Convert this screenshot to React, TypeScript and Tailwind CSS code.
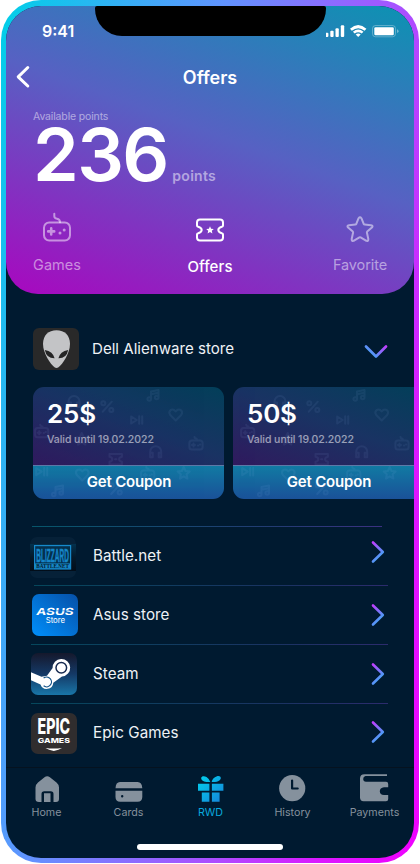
import type { ReactNode } from "react";

/* ---------- shared icon shapes, each centred on 0,0 ---------- */

const GAMEPAD = "M-4 -3.6 H4 Q6.6 -3.6 6.6 -1 V3 Q6.6 5.6 4 5.6 H-4 Q-6.6 5.6 -6.6 3 V-1 Q-6.6 -3.6 -4 -3.6 Z M-4 1 H-1 M-2.5 -.5 V2.5 M2 1.4 H2.2 M4 .4 H4.2 M-1.5 -7 Q-1.5 -5.5 0 -5.4 Q1 -5.2 1 -3.8";
const TICKET = "M-6.2 -5.2 H6.2 V-2.5 Q3.4 -2 3.4 0 Q3.4 2 6.2 2.5 V5.2 H-6.2 V2.5 Q-3.4 2 -3.4 0 Q-3.4 -2 -6.2 -2.5 Z M-.6 0 H.6";
const STAR = "M0 -6 L1.8 -2 L6 -1.6 L2.9 1.3 L3.7 5.6 L0 3.4 L-3.7 5.6 L-2.9 1.3 L-6 -1.6 L-1.8 -2 Z";
const HEART = "M0 5.5 L-5.5 0 Q-7.5 -3 -5 -5 Q-2.2 -6.4 0 -3.5 Q2.2 -6.4 5 -5 Q7.5 -3 5.5 0 Z";
const MUSIC = "M-2.5 3.5 V-4 L5 -5.5 V2 M-2.5 -1.2 L5 -2.7 M-2.5 3.5 a1.8 1.8 0 1 1 -3.6 0 a1.8 1.8 0 1 1 3.6 0 M5 2 a1.8 1.8 0 1 1 -3.6 0 a1.8 1.8 0 1 1 3.6 0";
const HEADPHONES = "M-5.5 3.5 V0 A5.5 5.5 0 0 1 5.5 0 V3.5 M-5.5 1 H-3 V5.5 H-5.5 Z M5.5 1 H3 V5.5 H5.5 Z";
const PERCENT = "M4.5 -5 L-4.5 5 M-2 -3.4 a2 2 0 1 1 -4 0 a2 2 0 1 1 4 0 M6 3.4 a2 2 0 1 1 -4 0 a2 2 0 1 1 4 0";
const PLAY_PAUSE = "M-5.5 -3.5 L0 0 L-5.5 3.5 Z M2.5 -3.8 V3.8 M5.5 -3.8 V3.8";

const PATTERN: [string, number, number][] = [
  [HEADPHONES, 41, 14.5],
  [PERCENT, 74.3, 19.7],
  [MUSIC, 120.5, 8.5],
  [PLAY_PAUSE, 103.7, 33],
  [HEART, 142.7, 28],
  [GAMEPAD, 8.7, 44.7],
  [STAR, 48.7, 52],
  [GAMEPAD, 163, 57],
  [HEADPHONES, 122.7, 64.7],
  [TICKET, 82.7, 72.3],
  [PLAY_PAUSE, 8.7, 84.7],
  [HEART, 49.3, 88],
  [GAMEPAD, 114.7, 87],
  [STAR, 150.7, 86],
  [MUSIC, 25, 104],
  [PERCENT, 82.7, 102],
];

function StatusBar() {
  return (
    <div className="flex h-[31px] shrink-0">
      <div className="w-[89px] pl-[36px] pt-[15px] text-[16px] font-[560] leading-[21px]">9:41</div>
      <div className="h-[30px] w-[231px] rounded-b-[27px] rounded-t-[2px] bg-black" />
      <svg width="76" height="18" viewBox="0 0 76 18" className="mt-[16px]" fill="#fff">
        <rect x="-.8" y="10.7" width="3.2" height="4.3" rx="1" />
        <rect x="4.3" y="8.7" width="3.3" height="6.3" rx="1" />
        <rect x="9.5" y="6.2" width="3.3" height="8.8" rx="1" />
        <rect x="14.8" y="3.2" width="3.4" height="11.8" rx="1" />
        <path d="M24 6.8 Q32.2 -.6 40.4 6.8 L38.6 8.8 Q32.2 3.5 25.8 8.8 Z" />
        <path d="M26.9 9.8 Q32.2 5.2 37.5 9.8 L35.7 11.6 Q32.2 9 28.7 11.6 Z" />
        <path d="M29.7 12.6 Q32.2 10.4 34.7 12.6 L32.2 15 Z" />
        <rect x="46.5" y="3.5" width="23" height="11.3" rx="3" fill="none" stroke="#fff" strokeOpacity=".3" />
        <rect x="48.3" y="5.2" width="19.5" height="8" rx="1.3" />
        <path d="M71 7.3 Q72.6 8 72.6 9.2 Q72.6 10.4 71 11.1 Z" fillOpacity=".4" />
      </svg>
    </div>
  );
}

function Header() {
  return (
    <header className="flex h-[288px] shrink-0 flex-col rounded-b-[32px] bg-[linear-gradient(200deg,#0b93b2_0%,#5761c3_46%,#a907bf_100%)]">
      <StatusBar />
      <div className="flex h-[66px] items-start pt-[28px]">
        <svg width="14" height="24" viewBox="0 0 14 24" className="ml-[10px]" fill="none" stroke="#fff" strokeWidth="3" strokeLinecap="round" strokeLinejoin="round">
          <path d="M11.8 2.5 L2.2 11.8 L11.8 21" />
        </svg>
        <h1 className="flex-1 pr-[24px] text-center text-[18px] font-[560] leading-[25px]">Offers</h1>
      </div>
      <p className="ml-[27px] h-[20px] pt-[6px] text-[10.5px] leading-[15px] tracking-[-0.15px] text-white/50">Available points</p>
      <div className="-mt-px ml-[27px] flex h-[79px] items-baseline">
        <span className="text-[73.5px] font-[580] leading-[66px] tracking-[-1.6px]">236</span>
        <span className="ml-[4.5px] text-[14px] font-semibold tracking-[0.3px] text-white/50">points</span>
      </div>
      <div className="flex justify-between px-[27px] text-[14.5px] leading-[20px]">
        <div className="flex w-[48px] flex-col items-center text-white/50">
          <svg width="30" height="32" viewBox="0 0 30 32" className="mt-[10px]" fill="none" stroke="currentColor" strokeWidth="2" strokeLinecap="round" strokeLinejoin="round">
            <path d="M12.3 2.8 V5.2 C12.3 7 13.2 7.4 15 7.7 C17 8 18 9 18 11.2" />
            <rect x="2" y="11.5" width="26" height="18" rx="5.2" />
            <path d="M6.2 20.4 H12.2 M9.2 17.4 V23.4" strokeWidth="2.6" />
            <circle cx="18" cy="22" r="1.5" fill="currentColor" stroke="none" />
            <circle cx="22.2" cy="19" r="1.5" fill="currentColor" stroke="none" />
          </svg>
          <span className="mt-[12px]">Games</span>
        </div>
        <div className="ml-[6px] flex w-[56px] flex-col items-center">
          <svg width="30" height="26" viewBox="0 0 30 26" className="mt-[16px]" fill="none" stroke="#fff" strokeWidth="2" strokeLinejoin="round">
            <path d="M5 2.5 H25 Q28 2.5 28 5.5 V8.4 Q28 9.5 26.8 9.8 Q23.3 10.8 23.3 13 Q23.3 15.2 26.8 16.2 Q28 16.5 28 17.6 V20.5 Q28 23.5 25 23.5 H5 Q2 23.5 2 20.5 V17.6 Q2 16.5 3.2 16.2 Q6.7 15.2 6.7 13 Q6.7 10.8 3.2 9.8 Q2 9.5 2 8.4 V5.5 Q2 2.5 5 2.5 Z" />
            <path d="M15 9.2 L16.1 11.7 L18.8 12 L16.8 13.8 L17.4 16.5 L15 15.1 L12.6 16.5 L13.2 13.8 L11.2 12 L13.9 11.7 Z" fill="#fff" stroke="none" />
          </svg>
          <span className="mt-[14px] text-[15px] font-medium tracking-[0.1px]">Offers</span>
        </div>
        <div className="flex w-[54px] flex-col items-center text-white/50">
          <svg width="28" height="28" viewBox="0 0 28 28" className="mt-[14px]" fill="none" stroke="currentColor" strokeWidth="2" strokeLinejoin="round">
            <path d="M12.6 3.2 Q14 1.2 15.4 3.2 L17.8 9.1 Q18 9.6 18.6 9.6 L25 10.2 Q27.6 10.7 25.9 12.5 L21.2 16.6 Q20.8 17 20.9 17.5 L22.3 24 Q22.4 26.4 20.4 25.8 L14.6 22.3 Q14 22 13.4 22.3 L7.6 25.8 Q5.6 26.4 5.7 24 L7.1 17.5 Q7.2 17 6.8 16.6 L2.1 12.5 Q.4 10.7 3 10.2 L9.4 9.6 Q10 9.6 10.2 9.1 Z" />
          </svg>
          <span className="mt-[12px] tracking-[-0.1px]">Favorite</span>
        </div>
      </div>
    </header>
  );
}

function Chevron({ down = false }: { down?: boolean }) {
  return down ? (
    <svg width="24" height="16" viewBox="0 0 24 16" fill="none" strokeWidth="2.7" strokeLinecap="round" strokeLinejoin="round">
      <defs>
        <linearGradient id="chevDown" gradientUnits="userSpaceOnUse" x1="22" y1="2" x2="10" y2="15">
          <stop stopColor="#c13cff" />
          <stop offset="1" stopColor="#3fa8f5" />
        </linearGradient>
      </defs>
      <path d="M2 2.5 L12 12.5 L22 2.5" stroke="url(#chevDown)" />
    </svg>
  ) : (
    <svg width="14" height="24" viewBox="0 0 14 24" fill="none" strokeWidth="2.6" strokeLinecap="round" strokeLinejoin="round">
      <defs>
        <linearGradient id="chevRight" gradientUnits="userSpaceOnUse" x1="2" y1="2" x2="14" y2="14">
          <stop stopColor="#c13cff" />
          <stop offset="1" stopColor="#3fa8f5" />
        </linearGradient>
      </defs>
      <path d="M2 2.5 L11.8 12 L2 21.5" stroke="url(#chevRight)" />
    </svg>
  );
}

function Coupon({ amount, shift }: { amount: string; shift: number }) {
  return (
    <article className="relative flex h-[112px] w-[191px] shrink-0 flex-col overflow-hidden rounded-[11px]">
      <div className="h-[78px] bg-[linear-gradient(200deg,#023f59_0%,#193363_48%,#301a5e_100%)] pl-[14px] pt-[10px]">
        <div className="text-[26px] font-[560] leading-[34px] tracking-[-0.2px]">{amount}</div>
        <div className="mt-[1px] text-[10.5px] font-medium leading-[15px] tracking-[-0.05px] text-white/55">Valid until 19.02.2022</div>
      </div>
      <button className="flex h-[34px] items-center justify-center border-t border-[#5d79a8] bg-[linear-gradient(180deg,#117aa3,#1a5198)] pl-[1px] text-[15px] font-[560] tracking-[-0.15px]">Get Coupon</button>
      <svg width="200" height="112" viewBox="0 0 200 112" className="pointer-events-none absolute left-0 top-0 opacity-[0.07]" fill="none" stroke="#a8c8ff" strokeWidth="2" strokeLinecap="round" strokeLinejoin="round">
        {PATTERN.map(([d, x, y], i) => (
          <path key={i} d={d} transform={`translate(${x + shift} ${y})`} />
        ))}
      </svg>
    </article>
  );
}

function AlienwareLogo() {
  return (
    <svg width="46" height="42" viewBox="0 0 46 42">
      <rect width="46" height="42" rx="6" fill="#292929" />
      <path d="M23.5 2.2 C31.5 2.2 37 7.2 37 16 C37 25 29.5 36.5 25.5 39.3 Q23.5 40.6 21.5 39.3 C17.5 36.5 10 25 10 16 C10 7.2 15.5 2.2 23.5 2.2 Z" fill="#c3c4c6" />
      <path d="M11.8 22 Q20 23.5 21.6 30.3 Q13.5 30.5 11.8 22 Z M35.2 22 Q27 23.5 25.4 30.3 Q33.5 30.5 35.2 22 Z" fill="#252525" />
    </svg>
  );
}

function BlizzardLogo() {
  return (
    <svg width="46" height="41" viewBox="0 0 46 41">
      <defs>
        <linearGradient id="blz" x2="0" y2="1">
          <stop stopColor="#03314d" />
          <stop offset=".5" stopColor="#04192a" />
          <stop offset="1" stopColor="#020d19" />
        </linearGradient>
      </defs>
      <rect width="46" height="41" rx="7" fill="#062138" />
      <rect y="7" width="46" height="27" fill="url(#blz)" />
      <rect x="4.6" y="8.6" width="36" height="23.4" fill="#04304d" stroke="#1689cb" strokeWidth="1.2" />
      <text transform="translate(22.6 24.6) scale(1 2.7)" textAnchor="middle" fontSize="6.5" fontWeight="700" fontFamily="Liberation Sans, sans-serif" fill="#1686c8" stroke="#1686c8" strokeWidth=".2">BLIZZARD</text>
      <rect x="5" y="26.4" width="35.2" height="5.4" fill="#1686c6" />
      <text x="22.6" y="31" textAnchor="middle" fontSize="5.2" fontWeight="700" fontFamily="Liberation Serif, serif" fill="#04192c">BATTLE.NET</text>
    </svg>
  );
}

function AsusLogo() {
  return (
    <svg width="46" height="42" viewBox="0 0 46 42">
      <defs>
        <linearGradient id="asus" x1="0" y1="1" x2="1" y2="0">
          <stop stopColor="#008ffb" />
          <stop offset="1" stopColor="#0650a7" />
        </linearGradient>
      </defs>
      <rect width="46" height="42" rx="7" fill="url(#asus)" />
      <text transform="translate(22.4 20.6) skewX(-10) scale(1.38 1)" textAnchor="middle" fontSize="9.8" fontWeight="700" fontFamily="Inter, sans-serif" fill="#fff">ASUS</text>
      <path d="M9 16.8 H40" stroke="#0870d0" strokeWidth=".6" />
      <text x="23.4" y="29.3" textAnchor="middle" fontSize="7.8" fontFamily="Inter, sans-serif" fill="#fff">Store</text>
    </svg>
  );
}

function SteamLogo() {
  return (
    <svg width="46" height="42" viewBox="0 0 46 42">
      <defs>
        <linearGradient id="steam" x2="0" y2="1">
          <stop stopColor="#15182c" />
          <stop offset=".5" stopColor="#143966" />
          <stop offset="1" stopColor="#1976a8" />
        </linearGradient>
        <clipPath id="steamTile"><rect width="46" height="42" rx="7" /></clipPath>
      </defs>
      <rect width="46" height="42" rx="7" fill="url(#steam)" />
      <g clipPath="url(#steamTile)">
        <path d="M0 19.3 L10.5 23.8 L16 22.8 L21.6 15 A8.8 8.8 0 1 1 31 23.5 L22.3 29.8 A6.6 6.6 0 0 1 9.5 31.5 L0 27.2 Z" fill="#fff" />
        <circle cx="30.3" cy="14.8" r="5.3" fill="#fff" stroke="#172a50" strokeWidth="1.5" />
        <path d="M12.6 25 A4.9 4.9 0 1 1 12.6 32.8" fill="none" stroke="#17558a" strokeWidth="1.2" />
      </g>
    </svg>
  );
}

function EpicLogo() {
  return (
    <svg width="46" height="41" viewBox="0 0 46 41" fill="#fff" fontFamily="Inter, sans-serif">
      <rect width="46" height="41" rx="7" fill="#302d2e" />
      <text transform="translate(22.8 21) scale(1 1.55)" textAnchor="middle" fontSize="14.2" fontWeight="800">EPIC</text>
      <text transform="translate(22.8 29.8) scale(1.28 1)" textAnchor="middle" fontSize="6.8" fontWeight="800">GAMES</text>
      <path d="M14.5 35 Q22.8 36 31 35 Q28 37 22.8 38 Q17.6 37 14.5 35 Z" />
    </svg>
  );
}

function StoreRow({ logo, name, logoClass, chevronClass, lineClass }: { logo: ReactNode; name: string; logoClass: string; chevronClass: string; lineClass: string }) {
  return (
    <li className="h-[59px]">
      <div className={`h-[1.4px] bg-[linear-gradient(90deg,#07566b,#233b73_70%,#3b3182)] ${lineClass}`} />
      <div className="flex h-[57px] items-center">
        <div className={`w-[46px] shrink-0 ${logoClass}`}>{logo}</div>
        <span className="flex-1 text-[15.2px] leading-[20px] tracking-[0.05px] text-[#eef2f6]">{name}</span>
        <div className={`mr-[29px] ${chevronClass}`}><Chevron /></div>
      </div>
    </li>
  );
}

function NavItem({ label, icon, active = false }: { label: string; icon: ReactNode; active?: boolean }) {
  return (
    <div className={`flex w-[82px] shrink-0 flex-col items-center ${active ? "text-[#08a9df]" : "text-[#85919d]"}`}>
      <div className="h-[31px]">{icon}</div>
      <span className="mt-[1px] text-[10.7px] leading-[15px]">{label}</span>
    </div>
  );
}

function BottomNav() {
  return (
    <nav className="flex h-[91px] shrink-0 flex-col items-center border-t border-[#05121f]">
      <div className="flex w-[408px] justify-center pl-[1px] pt-[5px]">
        <NavItem
          label="Home"
          icon={
            <svg width="28" height="31" viewBox="0 0 28 31" fill="currentColor">
              <path d="M11.5 4.2 Q14.2 2.2 16.9 4.2 L23.5 9.5 Q26 11.6 26 14.5 V26 Q26 29 23 29 H20.5 V21 Q20.5 18.3 17.8 18.3 H11.2 Q8.5 18.3 8.5 21 V29 H6 Q2.5 29 2.5 26 V14.5 Q2.5 11.6 5 9.5 Z M11 20.2 H17.5 V29 H11 Z" />
            </svg>
          }
        />
        <NavItem
          label="Cards"
          icon={
            <svg width="28" height="31" viewBox="0 0 28 31" fill="currentColor">
              <path d="M5 9 H22.5 Q27 9 27.3 15.3 H.5 Q.8 9 5 9 Z M.5 17.8 H27.3 V24 Q27.3 28.7 22.5 28.7 H5.2 Q.5 28.7 .5 24 Z M6 23.3 a1.2 1.2 0 1 0 2.4 0 a1.2 1.2 0 1 0 -2.4 0 Z" fillRule="evenodd" />
            </svg>
          }
        />
        <NavItem
          active
          label="RWD"
          icon={
            <svg width="28" height="31" viewBox="0 0 28 31">
              <defs>
                <linearGradient id="gift" x2="1" y2="1">
                  <stop stopColor="#00d2ee" />
                  <stop offset="1" stopColor="#1683d8" />
                </linearGradient>
              </defs>
              <path d="M13.3 9 H9.5 C6 8.8 4 7 4.2 4.8 C4.5 2.8 7.5 2.8 9.5 4 Q12.6 6 13.3 9 Z M14.7 9 C15 6.5 17 4.2 20 3.2 C22.6 2.4 24.2 4 23.8 5.6 C23.2 8 20.5 9 18 9 Z M1 10.8 H12.4 V17.8 H1 Z M14.9 10.8 H26.4 V17.8 H14.9 Z M4.8 19.6 H12.4 V28.7 H4.8 Z M14.9 19.6 H22.6 V28.7 H14.9 Z" fill="url(#gift)" />
            </svg>
          }
        />
        <NavItem
          label="History"
          icon={
            <svg width="28" height="31" viewBox="0 0 28 31">
              <circle cx="13.2" cy="15.2" r="13.1" fill="currentColor" />
              <path d="M13.1 7.5 V15.5 H18.7" fill="none" stroke="#001a30" strokeWidth="2.2" strokeLinecap="round" strokeLinejoin="round" />
            </svg>
          }
        />
        <NavItem
          label="Payments"
          icon={
            <svg width="30" height="31" viewBox="0 0 30 31" fill="currentColor">
              <path d="M4.5 1.2 H27 V3 H5.5 Q3.2 3.6 3.2 6 Q3.2 8.5 6 8.8 H26 Q28.2 8.8 28.2 11 V14.2 H24 Q19.8 14.8 19.8 18.2 Q19.8 21.7 24 22 H28.2 V26 Q28.2 28.2 26 28.2 H3.5 Q0 28.2 0 24.5 V5.5 Q0 1.2 4.5 1.2 Z" />
            </svg>
          }
        />
      </div>
      <div className="mt-[24px] h-[6px] w-[146px] rounded-full bg-white" />
    </nav>
  );
}

export default function App() {
  return (
    <div className="h-[864px] w-[420px] overflow-hidden bg-white pl-[1px] font-['Inter',sans-serif] text-white">
      <div className="h-[863px] w-[418px] rounded-[40px] bg-[linear-gradient(103deg,#00d0e8_0%,#6094ff_36%,#b04aff_68%,#dc18ff_84%,#f000ff_100%)] px-[5px] pb-[5px] pt-[6px]">
        <div className="flex h-full flex-col overflow-hidden rounded-[35px] bg-[#001a30]">
          <Header />
          <section className="h-[226px] shrink-0 pt-[34px]">
            <div className="flex h-[42px] items-center pl-[27px] pr-[26px]">
              <AlienwareLogo />
              <h2 className="ml-[13px] flex-1 text-[15.1px] leading-[20px] text-[#eef2f6]">Dell Alienware store</h2>
              <div className="mt-[5px]"><Chevron down /></div>
            </div>
            <div className="mt-[17px] flex gap-[9px] overflow-hidden pl-[27px]">
              <Coupon amount="25$" shift={0} />
              <Coupon amount="50$" shift={6} />
            </div>
          </section>
          <ul className="h-[247px] shrink-0 pt-[6px]">
            <StoreRow name="Battle.net" logo={<BlizzardLogo />} logoClass="ml-[24px] mr-[17px] mt-[4px]" chevronClass="-mt-[7px]" lineClass="ml-[26px] mr-[32px]" />
            <StoreRow name="Asus store" logo={<AsusLogo />} logoClass="ml-[26px] mr-[15px]" chevronClass="mt-[1px]" lineClass="ml-[28px] mr-[26px] opacity-75" />
            <StoreRow name="Steam" logo={<SteamLogo />} logoClass="ml-[25px] mr-[16px]" chevronClass="" lineClass="ml-[25px] mr-[26px] opacity-75" />
            <StoreRow name="Epic Games" logo={<EpicLogo />} logoClass="ml-[25px] mr-[16px] mt-[1px]" chevronClass="-mt-px" lineClass="ml-[25px] mr-[26px] opacity-75" />
          </ul>
          <BottomNav />
        </div>
      </div>
    </div>
  );
}
